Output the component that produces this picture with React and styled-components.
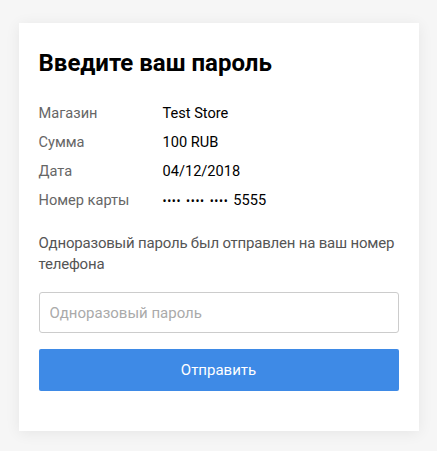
import React from "react";
import styled, { createGlobalStyle } from "styled-components";

const GlobalStyle = createGlobalStyle`
  html, body {
    margin: 0;
    padding: 0;
    background: #f6f6f6;
    font-family: Roboto, "Noto Sans", sans-serif;
  }
`;

const Page = styled.div`
  padding: 23px 0 19px;
`;

const Card = styled.div`
  width: 400px;
  margin: 0 auto;
  box-sizing: border-box;
  background: #fff;
  padding: 25px 20px 40px;
  box-shadow: 0 2px 14px rgba(0, 0, 0, 0.07);
`;

const Title = styled.h1`
  margin: 0 0 21px;
  font-size: 24px;
  line-height: 30px;
  font-weight: 700;
  color: #000;
`;

const Details = styled.div`
  display: flex;
  flex-direction: column;
`;

const Row = styled.div`
  display: grid;
  grid-template-columns: 124px 1fr;
  font-size: 14.6px;
  line-height: 29px;
`;

const Label = styled.span`
  color: #666;
`;

const Value = styled.span`
  color: #000;
`;

const Dots = styled.span`
  display: inline-block;
  font-size: 12px;
  letter-spacing: 0.6px;
  margin-right: 5px;
`;

const Note = styled.p`
  margin: 17px 0 17px;
  font-size: 15px;
  line-height: 21px;
  letter-spacing: -0.2px;
  color: #555;
`;

const Input = styled.input`
  display: block;
  width: 100%;
  box-sizing: border-box;
  height: 41px;
  padding: 0 10px;
  border: 1px solid #ccc;
  border-radius: 3px;
  font-family: inherit;
  font-size: 15px;
  color: #000;
  outline: none;
  &::placeholder {
    color: #aaa;
  }
`;

const Submit = styled.button`
  display: block;
  width: 100%;
  height: 42px;
  margin-top: 16px;
  border: 0;
  border-radius: 2px;
  background: #3e8ae6;
  color: #fff;
  font-family: inherit;
  font-size: 15px;
  cursor: pointer;
`;

const rows = [
  ["Магазин", "Test Store"],
  ["Сумма", "100 RUB"],
  ["Дата", "04/12/2018"],
];

export default function App() {
  return (
    <Page>
      <GlobalStyle />
      <Card>
        <Title>Введите ваш пароль</Title>
        <Details>
          {rows.map(([label, value]) => (
            <Row key={label}>
              <Label>{label}</Label>
              <Value>{value}</Value>
            </Row>
          ))}
          <Row>
            <Label>Номер карты</Label>
            <Value>
              <Dots>••••</Dots>
              <Dots>••••</Dots>
              <Dots>••••</Dots>
              5555
            </Value>
          </Row>
        </Details>
        <Note>Одноразовый пароль был отправлен на ваш номер телефона</Note>
        <Input type="text" placeholder="Одноразовый пароль" />
        <Submit type="button">Отправить</Submit>
      </Card>
    </Page>
  );
}
